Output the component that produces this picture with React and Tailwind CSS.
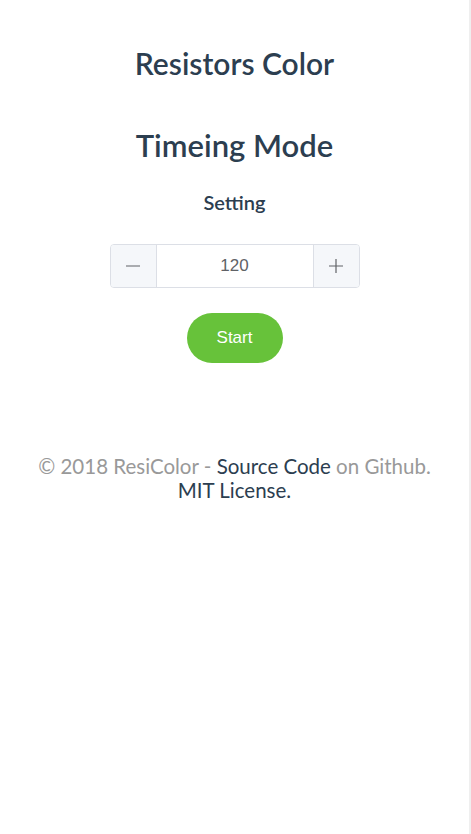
export default function App() {
  return (
    <div className="min-h-[834px] w-full bg-white flex">
      <div
        className="flex-1 flex flex-col items-center text-[#2c3e50] text-center"
        style={{ fontFamily: 'Lato, "Noto Sans", sans-serif' }}
      >
        <h1 className="mt-[44px] text-[30px] leading-[38px] font-semibold">Resistors Color</h1>
        <h2 className="mt-[44px] text-[31px] leading-[38px] font-semibold">Timeing Mode</h2>
        <h3 className="mt-[25px] text-[20px] leading-[26px] font-semibold">Setting</h3>

        <div className="mt-[29px] flex h-[44px] w-[250px] rounded border border-[#dcdfe6] overflow-hidden" style={{ fontFamily: '"Liberation Sans", Arial, sans-serif' }}>
          <button className="w-[46px] bg-[#f5f7fa] border-r border-[#dcdfe6] flex items-center justify-center text-[#606266]">
            <svg width="16" height="16" viewBox="0 0 16 16"><path d="M1 8h14" stroke="currentColor" strokeWidth="1.2" /></svg>
          </button>
          <div className="flex-1 flex items-center justify-center text-[17px] text-[#606266]">120</div>
          <button className="w-[46px] bg-[#f5f7fa] border-l border-[#dcdfe6] flex items-center justify-center text-[#606266]">
            <svg width="16" height="16" viewBox="0 0 16 16"><path d="M1 8h14M8 1v14" stroke="currentColor" strokeWidth="1.2" /></svg>
          </button>
        </div>

        <button
          className="mt-[25px] w-[96px] h-[50px] rounded-full bg-[#67c23a] text-white text-[17px]"
          style={{ fontFamily: '"Liberation Sans", Arial, sans-serif' }}
        >
          Start
        </button>

        <footer className="mt-[91px] text-[20.5px] leading-[24px] text-[#999999]">
          <p>
            © 2018 ResiColor - <span className="text-[#2c3e50]">Source Code</span> on Github.
          </p>
          <p className="text-[#2c3e50]">MIT License.</p>
        </footer>
      </div>
      <div className="w-[2px] bg-[#efefef]" />
    </div>
  );
}
